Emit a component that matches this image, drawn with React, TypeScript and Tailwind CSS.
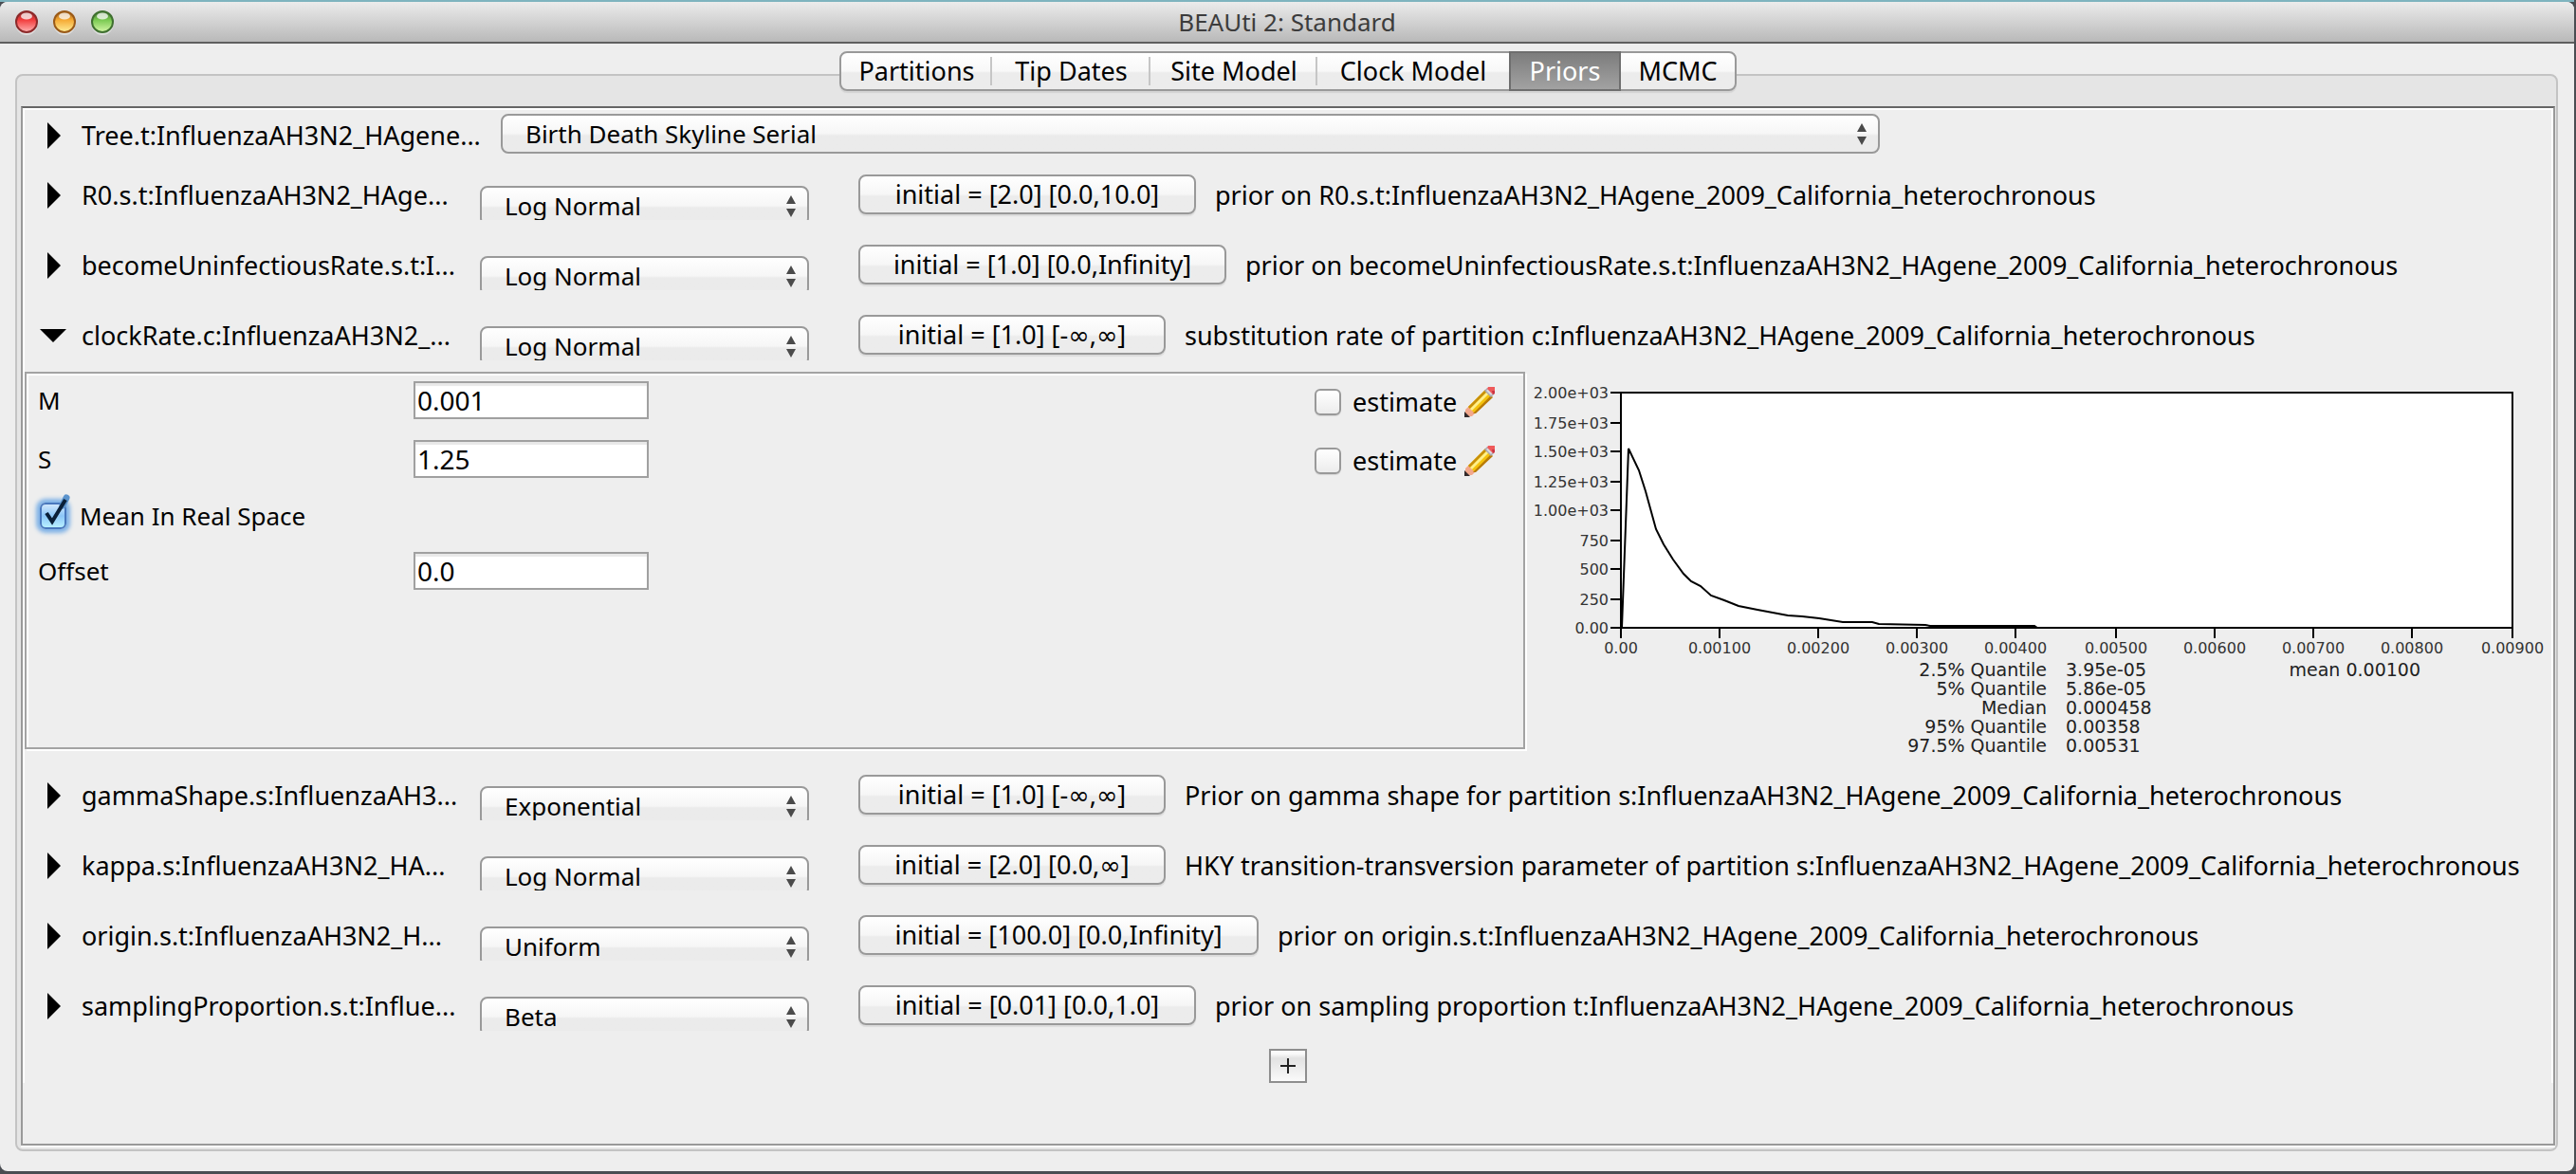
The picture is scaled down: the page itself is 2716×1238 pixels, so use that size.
type Prior = {
  label: string;
  dist: string;
  initial: string;
  width: string;
  desc: string;
  open?: boolean;
};

const DISTRIBUTIONS = ["Log Normal", "Exponential", "Uniform", "Beta", "Gamma", "Normal"];

const TOP_PRIORS: Prior[] = [
  {
    label: "R0.s.t:InfluenzaAH3N2_HAge...",
    dist: "Log Normal",
    initial: "initial = [2.0] [0.0,10.0]",
    width: "min-w-[356px]",
    desc: "prior on R0.s.t:InfluenzaAH3N2_HAgene_2009_California_heterochronous",
  },
  {
    label: "becomeUninfectiousRate.s.t:I...",
    dist: "Log Normal",
    initial: "initial = [1.0] [0.0,Infinity]",
    width: "min-w-[388px]",
    desc: "prior on becomeUninfectiousRate.s.t:InfluenzaAH3N2_HAgene_2009_California_heterochronous",
  },
  {
    label: "clockRate.c:InfluenzaAH3N2_...",
    dist: "Log Normal",
    initial: "initial = [1.0] [-∞,∞]",
    width: "min-w-[324px]",
    desc: "substitution rate of partition c:InfluenzaAH3N2_HAgene_2009_California_heterochronous",
    open: true,
  },
];

const BOTTOM_PRIORS: Prior[] = [
  {
    label: "gammaShape.s:InfluenzaAH3...",
    dist: "Exponential",
    initial: "initial = [1.0] [-∞,∞]",
    width: "min-w-[324px]",
    desc: "Prior on gamma shape for partition s:InfluenzaAH3N2_HAgene_2009_California_heterochronous",
  },
  {
    label: "kappa.s:InfluenzaAH3N2_HA...",
    dist: "Log Normal",
    initial: "initial = [2.0] [0.0,∞]",
    width: "min-w-[324px]",
    desc: "HKY transition-transversion parameter of partition s:InfluenzaAH3N2_HAgene_2009_California_heterochronous",
  },
  {
    label: "origin.s.t:InfluenzaAH3N2_H...",
    dist: "Uniform",
    initial: "initial = [100.0] [0.0,Infinity]",
    width: "min-w-[422px]",
    desc: "prior on origin.s.t:InfluenzaAH3N2_HAgene_2009_California_heterochronous",
  },
  {
    label: "samplingProportion.s.t:Influe...",
    dist: "Beta",
    initial: "initial = [0.01] [0.0,1.0]",
    width: "min-w-[356px]",
    desc: "prior on sampling proportion t:InfluenzaAH3N2_HAgene_2009_California_heterochronous",
  },
];

const TABS = [
  { name: "Partitions", width: "w-[159px]" },
  { name: "Tip Dates", width: "w-[167px]" },
  { name: "Site Model", width: "w-[176px]" },
  { name: "Clock Model", width: "w-[202px]" },
  { name: "Priors", width: "w-[114px]" },
  { name: "MCMC", width: "w-[120px]" },
];

const QUANTILES = [
  ["2.5% Quantile", "3.95e-05"],
  ["5% Quantile", "5.86e-05"],
  ["Median", "0.000458"],
  ["95% Quantile", "0.00358"],
  ["97.5% Quantile", "0.00531"],
];

const Y_TICKS = [
  { label: "2.00e+03", y: 22 },
  { label: "1.75e+03", y: 54 },
  { label: "1.50e+03", y: 84 },
  { label: "1.25e+03", y: 116 },
  { label: "1.00e+03", y: 146 },
  { label: "750", y: 178 },
  { label: "500", y: 208 },
  { label: "250", y: 240 },
  { label: "0.00", y: 270 },
];

const X_TICKS = [
  { label: "0.00", x: 99 },
  { label: "0.00100", x: 203 },
  { label: "0.00200", x: 307 },
  { label: "0.00300", x: 411 },
  { label: "0.00400", x: 515 },
  { label: "0.00500", x: 621 },
  { label: "0.00600", x: 725 },
  { label: "0.00700", x: 829 },
  { label: "0.00800", x: 933 },
  { label: "0.00900", x: 1039 },
];

function TrafficLight({ id, edge, mid, low, label }: { id: string; edge: string; mid: string; low: string; label: string }) {
  return (
    <button type="button" aria-label={label} className="size-6">
      <svg viewBox="0 0 24 24" className="size-6 overflow-visible">
        <defs>
          <linearGradient id={id} x1="0" y1="0" x2="0" y2="1">
            <stop offset="0" stopColor={edge} />
            <stop offset="0.4" stopColor={mid} />
            <stop offset="1" stopColor={low} />
          </linearGradient>
        </defs>
        <ellipse cx="12" cy="14" rx="11.5" ry="12" fill="#ffffff" opacity="0.45" />
        <circle cx="12" cy="12" r="11" fill={`url(#${id})`} stroke={edge} strokeWidth="2" />
        <ellipse cx="12" cy="6" rx="6" ry="3.6" fill="#ffffff" opacity="0.75" />
      </svg>
    </button>
  );
}

function Disclosure({ open, label }: { open?: boolean; label: string }) {
  return (
    <button type="button" aria-label={label} aria-expanded={!!open} className="flex size-7 shrink-0 items-center justify-center">
      <svg viewBox="0 0 28 28" className="size-7">
        <path d={open ? "M0 7H28L14 21Z" : "M8 0L22 14L8 28Z"} fill="#000" />
      </svg>
    </button>
  );
}

function Pencil() {
  return (
    <svg viewBox="0 0 32 32" className="size-8">
      <path d="M1 31V24L6 19L13 26L8 31Z" fill="#f3a88c" />
      <path d="M0 32V26L6 32Z" fill="#332a2a" />
      <path d="M4 21L22 3L29 10L11 28Z" fill="#f4c20c" />
      <path d="M4 21L22 3L24 5L6 23Z" fill="#c8900a" />
      <path d="M6 23L24 5L26 7L8 25Z" fill="#fff08a" />
      <path d="M9 28L28 9L30 11L12 28Z" fill="#b87a06" />
      <path d="M21 4L24 1L31 8L28 11Z" fill="#a9a9b1" />
      <path d="M23 4L25 2L30 7L28 9Z" fill="#d9d9e0" />
      <path d="M25 0H32V7L30 8L24 2Z" fill="#ef5a5a" />
      <path d="M29 4H32V7L30 8Z" fill="#c93444" />
    </svg>
  );
}

function Popup({ id, value, label, clipped }: { id: string; value: string; label: string; clipped?: boolean }) {
  const options = clipped ? DISTRIBUTIONS : [value, "Coalescent Constant Population", "Yule Model"];
  return (
    <div className="relative w-full">
      <select
        id={id}
        aria-label={label}
        defaultValue={value}
        className="block h-[42px] w-full appearance-none rounded-lg border-2 border-[#999999] bg-linear-to-b from-white from-0% via-[#f6f6f6] via-50% to-[#ebebeb] to-55% pl-6 text-[26px] leading-9 text-black"
      >
        {options.map((o) => (
          <option key={o}>{o}</option>
        ))}
      </select>
      <svg viewBox="0 0 10 24" className="pointer-events-none absolute top-2.5 right-3.5 h-6 w-2.5">
        <path d="M5 0L10 9H0Z M0 14H10L5 23Z" fill="#4a4a4a" />
      </svg>
    </div>
  );
}

function PriorRow({ prior }: { prior: Prior }) {
  return (
    <div className="flex h-[74px] items-center pl-4">
      <Disclosure open={prior.open} label={"Toggle " + prior.label} />
      <span className="ml-4 w-[420px] shrink-0 whitespace-nowrap">{prior.label}</span>
      <div className="mt-4 h-9 w-[347px] shrink-0 overflow-hidden">
        <Popup id={prior.label} value={prior.dist} label={prior.label + " distribution"} clipped />
      </div>
      <button
        type="button"
        className={
          "mb-0.5 ml-[52px] h-[42px] shrink-0 whitespace-nowrap rounded-lg border-2 border-[#999999] bg-linear-to-b from-white from-0% via-[#f6f6f6] via-50% to-[#ececec] to-55% px-5 leading-9 shadow-[0_2px_1px_rgba(0,0,0,0.08)] " +
          prior.width
        }
      >
        {prior.initial}
      </button>
      <span className="ml-5 whitespace-nowrap">{prior.desc}</span>
    </div>
  );
}

function ParamRow({ name, value, estimate }: { name: string; value: string; estimate?: boolean }) {
  return (
    <div className="flex h-[62px] items-center">
      <label htmlFor={"param-" + name} className="w-[396px] text-[26px]">
        {name}
      </label>
      <input
        id={"param-" + name}
        type="text"
        defaultValue={value}
        className="h-10 w-[248px] border-2 border-[#a0a0a0] bg-white pl-0.5 text-[28px] leading-9 shadow-[inset_0_3px_1px_#e8e8e8]"
      />
      {estimate && (
        <div className="mt-1 mr-[30px] ml-auto flex items-center">
          <input
            id={"estimate-" + name}
            type="checkbox"
            className="size-7 appearance-none rounded-md border-2 border-[#999999] bg-linear-to-b from-white to-[#ececec] shadow-[0_1px_1px_rgba(0,0,0,0.1)]"
          />
          <label htmlFor={"estimate-" + name} className="ml-3 w-[108px]">
            estimate
          </label>
          <button type="button" aria-label={"Edit " + name} className="ml-2.5 size-8">
            <Pencil />
          </button>
        </div>
      )}
    </div>
  );
}

function DensityChart() {
  return (
    <div className="w-[1080px] shrink-0">
      <svg viewBox="0 0 1080 304" className="block h-[304px] w-full" fontFamily="'DejaVu Sans', sans-serif" fontSize="16" fill="#333">
        <rect x="99" y="22" width="940" height="248" fill="#fff" stroke="#000" strokeWidth="2" />
        {Y_TICKS.map((t) => (
          <g key={t.label}>
            <path d={`M88 ${t.y}H99`} stroke="#000" strokeWidth="2" />
            <text x="86" y={t.y + 6} textAnchor="end">
              {t.label}
            </text>
          </g>
        ))}
        {X_TICKS.map((t) => (
          <g key={t.label}>
            <path d={`M${t.x} 270V281`} stroke="#000" strokeWidth="2" />
            <text x={t.x} y="297" textAnchor="middle">
              {t.label}
            </text>
          </g>
        ))}
        <path
          d="M100 270L107 81L118 104L125 126L136 166L144 182L154 198L165 213L173 221L183 226L194 236L208 241L223 247L243 251L275 257L290 258L308 260L333 264L364 264L371 266L420 267L425 268L535 268L538 270"
          fill="none"
          stroke="#000"
          strokeWidth="2"
        />
      </svg>
      <div className="-mb-2 flex items-start font-['DejaVu_Sans',sans-serif] text-[19px] leading-5 text-[#222]">
        <table className="ml-[396px] border-collapse">
          <tbody>
            {QUANTILES.map(([name, value]) => (
              <tr key={name}>
                <th scope="row" className="w-[152px] p-0 text-right font-normal whitespace-nowrap">
                  {name}
                </th>
                <td className="p-0 pl-5 whitespace-nowrap">{value}</td>
              </tr>
            ))}
          </tbody>
        </table>
        <span className="mr-[138px] ml-auto">mean 0.00100</span>
      </div>
    </div>
  );
}

export default function App() {
  return (
    <div className="flex min-h-screen flex-col bg-[#4a4d52] pr-0.5 pb-[3px] font-['Noto_Sans','DejaVu_Sans',sans-serif] text-[27px] leading-9 text-black">
      <div className="h-0.5 shrink-0 bg-[#7fb4bf]" />
      <div className="flex flex-1 flex-col overflow-hidden rounded-lg bg-[#eeeeee]">
        <header className="flex h-11 shrink-0 items-center border-b-2 border-[#5f5f5f] bg-linear-to-b from-[#ececec] to-[#b9b9b9]">
          <div className="flex flex-1 gap-4 pl-4">
            <TrafficLight id="light-close" label="Close" edge="#8c2a2a" mid="#f23c3c" low="#ffb4b4" />
            <TrafficLight id="light-min" label="Minimize" edge="#9a5a18" mid="#f5a832" low="#fff09a" />
            <TrafficLight id="light-zoom" label="Zoom" edge="#3f7030" mid="#78c850" low="#d6f8a8" />
          </div>
          <h1 className="text-[26px] text-[#3c3c3c]">BEAUti 2: Standard</h1>
          <div className="flex-1 pr-4" />
        </header>

        <main className="flex flex-1 flex-col pt-8 pr-[17px] pb-[21px] pl-4">
          <div className="flex flex-1 flex-col rounded-lg border-2 border-[#c3c3c3] bg-[#e5e5e5] pr-px pb-0.5 pl-1">
            <nav className="-mt-[26px] mb-4 flex justify-center">
              <div role="tablist" className="flex h-[42px] rounded-lg border-2 border-[#999999] bg-linear-to-b from-white from-0% via-[#f8f8f8] via-50% to-[#ececec] to-55% shadow-[0_2px_1px_rgba(0,0,0,0.08)]">
                {TABS.map((t, i) => (
                  <div
                    key={t.name}
                    className={
                      "flex items-center " +
                      (t.name === "Priors" ? "-my-0.5 border-2 border-[#6e6e6e] bg-linear-to-b from-[#7d7d7d] to-[#a2a2a2] text-white" : "")
                    }
                  >
                    <button type="button" role="tab" aria-selected={t.name === "Priors"} className={"leading-9 whitespace-nowrap " + t.width}>
                      {t.name}
                    </button>
                    {i < 3 && <span className="-ml-0.5 h-[30px] w-0.5 bg-[#c6c6c6]" />}
                  </div>
                ))}
              </div>
            </nav>

            <section className="flex-1 border-2 border-[#999999] border-t-[#666666] bg-[#eeeeee]">
              <div className="h-full border-x-2 border-t-2 border-white">
                <div className="flex h-[53px] items-center pl-4">
                  <Disclosure label="Toggle tree prior" />
                  <span className="ml-4 w-[442px] shrink-0 whitespace-nowrap">Tree.t:InfluenzaAH3N2_HAgene...</span>
                  <div className="mb-1 w-full max-w-[1454px]">
                    <Popup id="tree-prior" value="Birth Death Skyline Serial" label="Tree prior" />
                  </div>
                </div>

                {TOP_PRIORS.map((p) => (
                  <PriorRow key={p.label} prior={p} />
                ))}

                <div className="mt-px mb-2.5 flex h-[400px]">
                  <div className="mr-0.5 mb-0.5 flex-1 border-2 border-[#a3a3a3] shadow-[inset_2px_2px_0_#ffffff,2px_2px_0_#ffffff]">
                    <div className="pl-3">
                      <div className="-mt-[3px]">
                        <ParamRow name="M" value="0.001" estimate />
                        <ParamRow name="S" value="1.25" estimate />
                      </div>
                      <div className="flex h-14 items-center pt-0.5">
                        <span className="relative flex size-8 items-center justify-center">
                          <input
                            id="mean-real"
                            type="checkbox"
                            defaultChecked
                            className="size-7 appearance-none rounded-md border-2 border-[#4a78bd] bg-linear-to-b from-[#cfe6fb] via-[#8cc6f8] to-[#b8f0ff] shadow-[0_0_4px_4px_#7fb2e6]"
                          />
                          <svg viewBox="0 0 32 32" className="pointer-events-none absolute inset-0 size-8 overflow-visible">
                            <path d="M26 5L30 -3" stroke="#5b93cc" strokeWidth="7" strokeLinecap="round" />
                            <path d="M9 13L15 22L29 -1" fill="none" stroke="#0a1f38" strokeWidth="4" />
                          </svg>
                        </span>
                        <label htmlFor="mean-real" className="ml-3 text-[26px]">
                          Mean In Real Space
                        </label>
                      </div>
                      <ParamRow name="Offset" value="0.0" />
                    </div>
                  </div>
                  <DensityChart />
                </div>

                {BOTTOM_PRIORS.map((p) => (
                  <PriorRow key={p.label} prior={p} />
                ))}

                <div className="mt-2 flex justify-center">
                  <button
                    type="button"
                    aria-label="Add prior"
                    className="flex h-9 w-10 items-center justify-center border-2 border-[#8e8e8e] bg-linear-to-b from-[#fafafa] from-10% via-[#e2e2e2] via-25% to-[#fafafa]"
                  >
                    <svg viewBox="0 0 16 16" className="size-4">
                      <path d="M8 0V16M0 8H16" stroke="#222" strokeWidth="2" />
                    </svg>
                  </button>
                </div>
              </div>
            </section>
            <div className="h-0.5 bg-white" />
          </div>
        </main>
      </div>
    </div>
  );
}
